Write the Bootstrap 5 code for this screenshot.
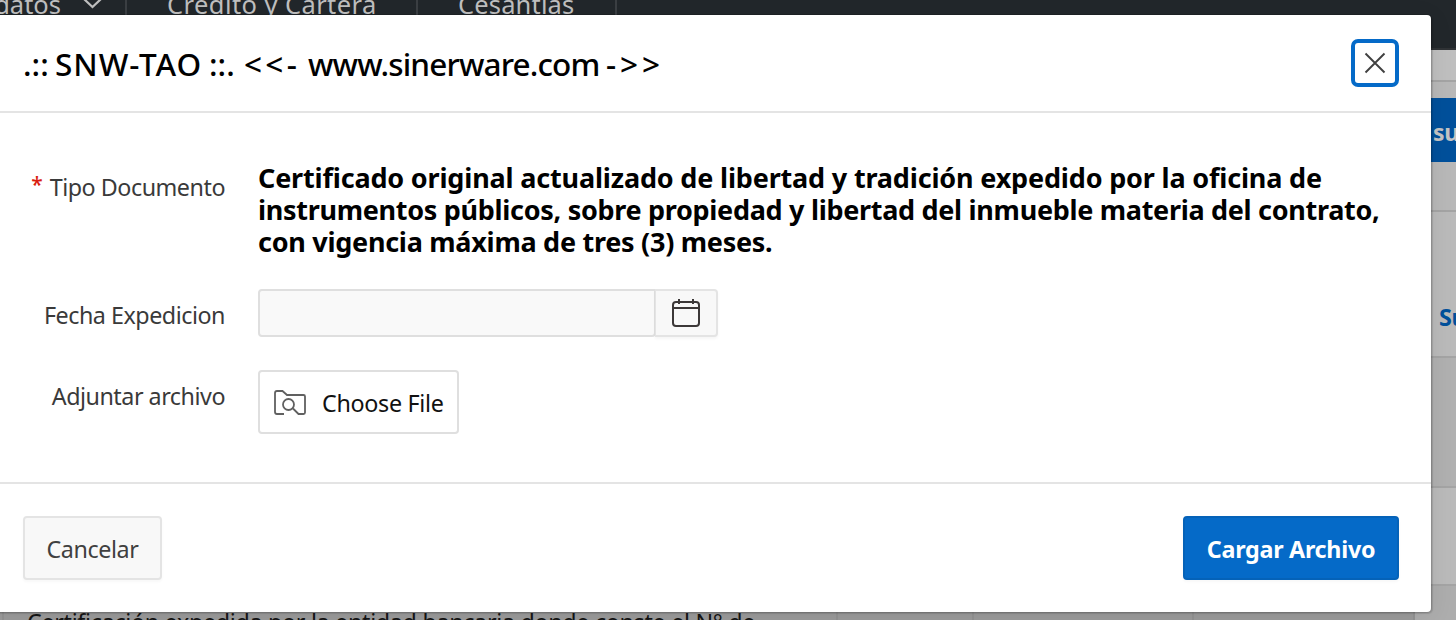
<!DOCTYPE html>
<html lang="es">
<head>
<meta charset="utf-8">
<meta name="viewport" content="width=device-width, initial-scale=1">
<title>SNW-TAO</title>
<link href="https://cdn.jsdelivr.net/npm/bootstrap@5.3.0/dist/css/bootstrap.min.css" rel="stylesheet">
<style>
  body { font-family: "Noto Sans", "Open Sans", sans-serif; font-size: 23.3px; font-weight: 370; line-height: 32px; letter-spacing: -.3px; color: #3a3a3a; height: 620px; overflow: hidden; }
  /* page behind the dialog, already dimmed */
  .page { height: 620px; background: #b8b8b8; }
  .topnav { height: 50px; background: #22272b; border-bottom: 2px solid #303336; color: #bfbfbf; font-size: 25.5px; align-items: flex-start; }
  .topnav .tab { border-right: 2px solid #3b3f43; line-height: 32px; margin-top: -12px; height: 60px; white-space: nowrap; }
  .tab-data { width: 127px; padding-right: 23px; letter-spacing: 0; }
  .tab-data svg { margin-left: 22px; flex: none; }
  .tab-credit { width: 291px; padding-left: 40px; letter-spacing: .42px; }
  .tab-ces { width: 199px; padding-left: 40px; letter-spacing: .15px; }
  .strip { border-bottom: 2px solid #a4a4a4; }
  .strip-a { height: 32px; background: #bfbfbf; }
  .strip-b { height: 130px; padding-top: 16px; }
  .strip-c { height: 146px; background: #bababa; }
  .strip-d { height: 130px; background: #b0b0b0; }
  .strip-e { height: 98px; background: #bababa; }
  .side-btn { height: 64px; width: 60px; margin-right: -34px; background: #00509b; color: #c4c4c4; font-weight: 700; font-size: 23px; padding-left: 3px; line-height: 68px; white-space: nowrap; flex: none; }
  .side-link { color: #00509b; font-weight: 700; padding: 89px 0 0 1439px; white-space: nowrap; }
  .last-row { height: 60px; background: #9b9b9b; color: #151515; }
  .last-row > div { height: 60px; border-right: 2px solid #939393; }
  .last-row .txt { width: 834px; padding: 16px 0 0 23px; white-space: nowrap; letter-spacing: -.31px; }
  /* dialog */
  .dialog-box { position: absolute; left: -8px; top: 15px; width: 1439px; height: 597px; padding-left: 8px; background: #fff; border-radius: 4px; box-shadow: 0 0 0 1px rgba(0,0,0,.1), 1px 1px 1px 1px rgba(0,0,0,.12), 0 4px 24px rgba(0,0,0,.08); }
  .dlg-head { height: 98px; padding: 0 32px 0 23px; border-bottom: 2px solid #e4e4e4; }
  .dlg-title { color: #000; font-size: 31.5px; font-weight: 500; line-height: 44px; padding-top: 2px; white-space: pre; letter-spacing: 0; }
  .dlg-title span { display: inline-block; }
  .close-btn { width: 48px; height: 48px; border: 4px solid #056ac8; border-radius: 7px; background: #fff; padding: 0; }
  .dlg-body { height: 369px; padding-top: 48px; }
  .lbl { width: 225px; margin-right: 33px; padding-top: 10px; text-align: right; letter-spacing: -.48px; flex: none; }
  .req { color: #d91c10; font-size: 21px; font-weight: 500; letter-spacing: 0; position: relative; top: -4px; margin-right: 7px; }
  .doc-title { color: #000; font-size: 27px; line-height: 32px; padding-top: 1px; font-weight: 700; white-space: nowrap; letter-spacing: -.17px; }
  .doc-title .l2 { letter-spacing: -.3px; }
  .doc-title .l3 { letter-spacing: -.27px; }
  .date-in { width: 398px; height: 48px; background: #f9f9f9; border: 2px solid #dfdfdf; border-radius: 4px 0 4px 4px; padding: 0; flex: none; }
  .date-btn { width: 63px; height: 48px; margin-left: -1px; background: #f8f8f8; border: 2px solid #e4e4e4; border-left-width: 1px; border-radius: 0 4px 4px 0; box-shadow: 0 2px 3px rgba(0,0,0,.04); padding: 0; }
  .file-btn { width: 201px; height: 64px; border: 2px solid #dfdfdf; border-radius: 4px; background: #fff; color: #111; font-size: inherit; font-weight: inherit; padding: 2px 0 0 14px; letter-spacing: -.3px; white-space: nowrap; }
  .dlg-foot { border-top: 2px solid #e4e4e4; padding: 32px 32px 0 23px; }
  .b { height: 64px; border-radius: 4px; font-size: 23.3px; line-height: 32px; padding: 1px 0 0; letter-spacing: -.4px; white-space: nowrap; font-weight: inherit; }
  .b-cancel { width: 139px; background: #f8f8f8; border: 2px solid #e4e4e4; color: #404040; box-shadow: 0 2px 3px rgba(0,0,0,.03); }
  .b-load { width: 216px; background: #056ac8; border: 2px solid #0562b8; color: #fff; font-weight: 700; letter-spacing: -.28px; box-shadow: 0 2px 3px rgba(0,0,0,.03); }
</style>
</head>
<body>
<div class="page d-flex flex-column">
  <nav class="topnav d-flex flex-shrink-0">
    <div class="tab tab-data d-flex justify-content-end">datos
      <svg width="19" height="32" viewBox="0 0 19 32" fill="none" stroke="#bfbfbf" stroke-width="2.2"><path d="M1 11l8.500 8L18 11"/></svg>
    </div>
    <div class="tab tab-credit">Crédito y Cartera</div>
    <div class="tab tab-ces">Cesantías</div>
  </nav>
  <div class="strip strip-a flex-shrink-0"></div>
  <div class="strip strip-b flex-shrink-0 d-flex justify-content-end"><div class="side-btn">subir</div></div>
  <div class="strip strip-c flex-shrink-0"><div class="side-link">Subir</div></div>
  <div class="strip strip-d flex-shrink-0"></div>
  <div class="strip strip-e flex-shrink-0"></div>
  <div class="last-row d-flex flex-shrink-0">
    <div style="width:4px"></div>
    <div class="txt"><span class="d-block pt-1">Certificación expedida por la entidad bancaria donde conste el N° de</span></div>
    <div style="width:136px"></div><div style="width:220px"></div><div style="width:221px"></div>
    <div class="flex-grow-1 border-0" style="background:#adadad"></div>
  </div>
</div>

<section class="dialog-box d-flex flex-column" role="dialog" aria-labelledby="t">
  <header class="dlg-head d-flex align-items-center justify-content-between flex-shrink-0">
    <h1 class="dlg-title m-0" id="t"><span style="width:32px">.::</span><span style="width:154px;letter-spacing:.95px">SNW-TAO</span><span style="width:35px">::.</span><span style="width:64px;letter-spacing:3.3px">&lt;&lt;-</span><span style="width:298px;letter-spacing:-.85px">www.sinerware.com</span><span style="letter-spacing:3.9px">-&gt;&gt;</span></h1>
    <button class="btn close-btn d-flex align-items-center justify-content-center" aria-label="Cerrar">
      <svg width="22" height="22" viewBox="0 0 22 22" fill="none" stroke="#404040" stroke-width="1.900"><path d="M1.500 1.500l19 19M20.500 1.500l-19 19"/></svg>
    </button>
  </header>

  <div class="dlg-body flex-shrink-0">
    <div class="d-flex" style="height:128px">
      <label class="lbl"><span class="req">*</span>Tipo Documento</label>
      <div class="doc-title"><div>Certificado original actualizado de libertad y tradición expedido por la oficina de</div><div class="l2">instrumentos públicos, sobre propiedad y libertad del inmueble materia del contrato,</div><div class="l3">con vigencia máxima de tres (3) meses.</div></div>
    </div>
    <div class="d-flex" style="height:81px">
      <label class="lbl">Fecha Expedicion</label>
      <input class="form-control date-in" type="text" aria-label="Fecha Expedicion">
      <button class="btn date-btn d-flex align-items-center justify-content-center" aria-label="Calendario">
        <svg width="28" height="30" viewBox="0 0 28 30" fill="none" stroke="#3c3838" stroke-width="2"><rect x="1" y="4" width="26" height="24" rx="3"/><path d="M1 10h26M7 1v5M21 1v5"/></svg>
      </button>
    </div>
    <div class="d-flex">
      <label class="lbl">Adjuntar archivo</label>
      <button class="btn file-btn d-flex align-items-center">
        <svg class="me-3" width="32" height="26" viewBox="0 0 32 26" fill="none" stroke="#606060" stroke-width="1.800"><path d="M10 24H3q-2 0-2-2V3q0-2 2-2h5.500l4.500 4h16.500q1.500 0 1.500 1.500v16q0 1.500-1.500 1.500h-5l-5.500-5.500"/><circle cx="14.500" cy="14.500" r="5.500"/></svg>
        Choose File
      </button>
    </div>
  </div>

  <footer class="dlg-foot d-flex justify-content-between flex-grow-1 align-items-start">
    <button class="btn b b-cancel">Cancelar</button>
    <button class="btn b b-load">Cargar Archivo</button>
  </footer>
</section>
<script src="https://cdn.jsdelivr.net/npm/bootstrap@5.3.0/dist/js/bootstrap.bundle.min.js"></script>
</body>
</html>
